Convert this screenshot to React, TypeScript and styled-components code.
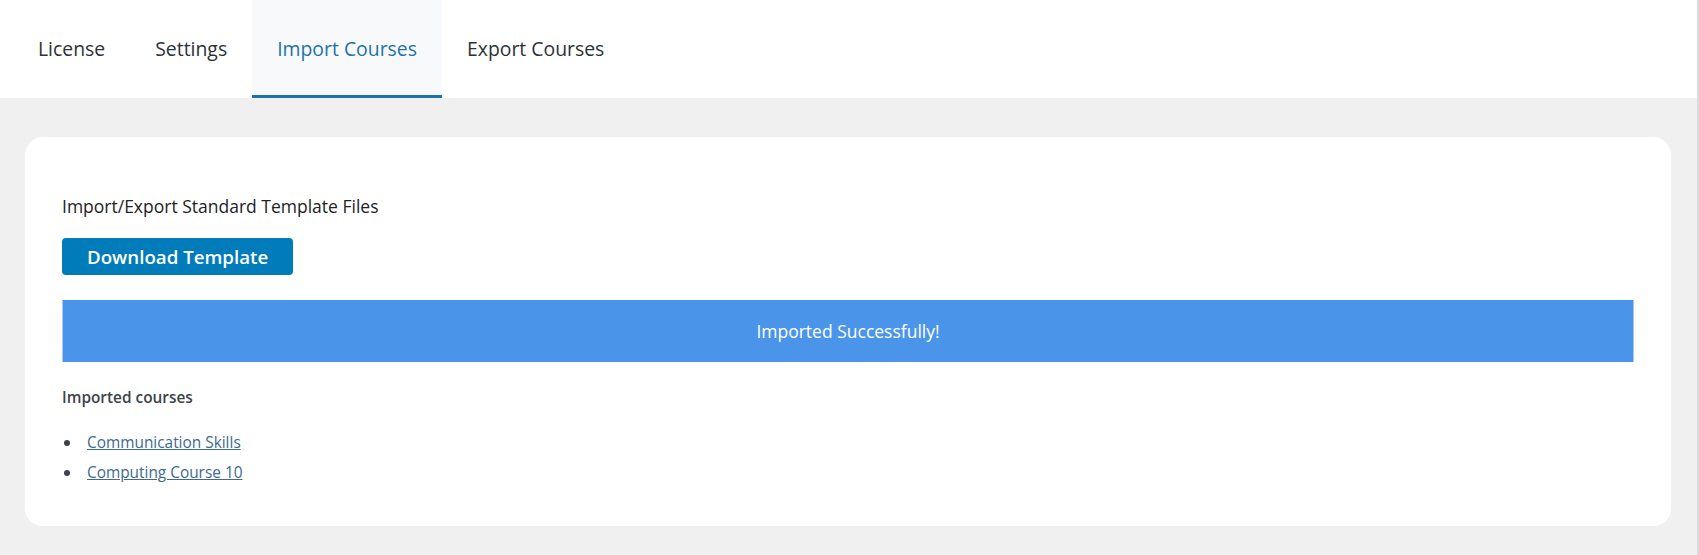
import React from 'react';
import styled, { createGlobalStyle } from 'styled-components';

const GlobalStyle = createGlobalStyle`
  html, body {
    margin: 0;
    padding: 0;
    background: #f0f0f1;
    font-family: 'Open Sans', 'Noto Sans', sans-serif;
  }
`;

const Page = styled.div`
  min-height: 555px;
  background: #f0f0f1;
  border-right: 2px solid #dcdcde;
  box-sizing: border-box;
`;

const TabBar = styled.nav`
  display: flex;
  height: 98px;
  padding-left: 13px;
  background: #ffffff;
`;

const Tab = styled.a<{ $active?: boolean }>`
  display: flex;
  align-items: center;
  padding: 0 25px;
  font-size: 19.4px;
  color: ${(p) => (p.$active ? '#1e73a8' : '#2c3338')};
  background: ${(p) => (p.$active ? '#f8f9fb' : 'transparent')};
  border-bottom: 3px solid ${(p) => (p.$active ? '#1e73a8' : 'transparent')};
  padding-top: 2px;
  text-decoration: none;
  cursor: pointer;
`;

const Content = styled.main`
  padding: 39px 26px 28px 25px;
`;

const Card = styled.section`
  display: flex;
  flex-direction: column;
  align-items: flex-start;
  background: #ffffff;
  border-radius: 18px;
  padding: 57px 37px 38px;
`;

const Heading = styled.p`
  margin: 0;
  font-size: 17.5px;
  color: #1d2327;
`;

const DownloadButton = styled.button`
  margin-top: 20px;
  height: 37px;
  padding: 0 25px;
  border: none;
  border-radius: 4px;
  background: #007cba;
  color: #ffffff;
  font-family: 'Open Sans', 'Noto Sans', sans-serif;
  font-size: 18.7px;
  font-weight: 600;
  cursor: pointer;
`;

const Notice = styled.div`
  align-self: stretch;
  margin-top: 25px;
  height: 62px;
  display: flex;
  align-items: center;
  justify-content: center;
  background: #4a95ea;
  border-left: 1px solid #a9c9f0;
  border-right: 1px solid #a9c9f0;
  color: #ffffff;
  font-size: 17.5px;
`;

const SubHeading = styled.h4`
  margin: 25px 0 0;
  font-size: 15.4px;
  font-weight: 600;
  color: #3c434a;
`;

const CourseList = styled.ul`
  margin: 20px 0 0;
  padding: 0;
  list-style: none;
`;

const CourseItem = styled.li`
  display: flex;
  align-items: center;
  gap: 17px;
  font-size: 15.4px;
  line-height: 30px;

  &::before {
    content: '';
    width: 6px;
    height: 6px;
    margin-left: 2px;
    border-radius: 50%;
    background: #3c434a;
  }
`;

const CourseLink = styled.a`
  color: #3e6a90;
  text-decoration: underline;
`;

const tabs = ['License', 'Settings', 'Import Courses', 'Export Courses'];
const courses = ['Communication Skills', 'Computing Course 10'];

const App: React.FC = () => {
  return (
    <Page>
      <GlobalStyle />
      <TabBar>
        {tabs.map((label) => (
          <Tab key={label} $active={label === 'Import Courses'}>
            {label}
          </Tab>
        ))}
      </TabBar>
      <Content>
        <Card>
          <Heading>Import/Export Standard Template Files</Heading>
          <DownloadButton>Download Template</DownloadButton>
          <Notice>Imported Successfully!</Notice>
          <SubHeading>Imported courses</SubHeading>
          <CourseList>
            {courses.map((name) => (
              <CourseItem key={name}>
                <CourseLink href="#">{name}</CourseLink>
              </CourseItem>
            ))}
          </CourseList>
        </Card>
      </Content>
    </Page>
  );
};

export default App;
